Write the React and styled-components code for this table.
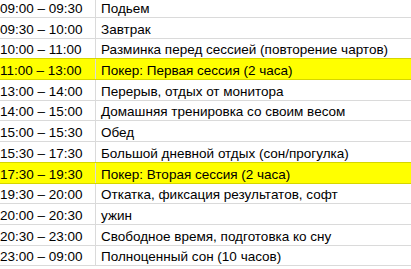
import React from "react";
import styled, { createGlobalStyle } from "styled-components";

const Global = createGlobalStyle`
  html, body { margin: 0; padding: 0; background: #fff; overflow: hidden; }
  body { font-family: "Liberation Sans", Arial, sans-serif; }
`;

const Sheet = styled.div`
  width: 411px;
  height: 269px;
  overflow: hidden;
`;

const Table = styled.div`
  margin-top: -2.7px;
  display: flex;
  flex-direction: column;
`;

const Row = styled.div`
  box-sizing: border-box;
  height: 20.7px;
  display: grid;
  grid-template-columns: 96px 1fr;
  border-bottom: 1px solid ${(p) => (p.$hl ? "#d6d600" : "#dadada")};
  background: ${(p) => (p.$hl ? "#ffff00" : "#ffffff")};
  box-shadow: ${(p) => (p.$hl ? "0 -1px 0 #d6d600" : "none")};
`;

const Cell = styled.div`
  box-sizing: border-box;
  display: flex;
  align-items: flex-end;
  padding: 0 0 1px ${(p) => p.$pad}px;
  font-size: 13.5px;
  line-height: 15px;
  color: #000;
  white-space: nowrap;
  overflow: visible;
  border-right: ${(p) => (p.$first ? "1px solid #dadada" : "none")};
`;

const rows = [
  ["09:00 – 09:30", "Подьем"],
  ["09:30 – 10:00", "Завтрак"],
  ["10:00 – 11:00", "Разминка перед сессией (повторение чартов)"],
  ["11:00 – 13:00", "Покер: Первая сессия (2 часа)", true],
  ["13:00 – 14:00", "Перерыв, отдых от монитора"],
  ["14:00 – 15:00", "Домашняя тренировка со своим весом"],
  ["15:00 – 15:30", "Обед"],
  ["15:30 – 17:30", "Большой дневной отдых (сон/прогулка)"],
  ["17:30 – 19:30", "Покер: Вторая сессия (2 часа)", true],
  ["19:30 – 20:00", "Откатка, фиксация результатов, софт"],
  ["20:00 – 20:30", "ужин"],
  ["20:30 – 23:00", "Свободное время, подготовка ко сну"],
  ["23:00 – 09:00", "Полноценный сон (10 часов)"],
];

export default function App() {
  return (
    <>
      <Global />
      <Sheet>
        <Table>
          {rows.map(([t, d, hl]) => (
            <Row key={t} $hl={hl}>
              <Cell $first $pad={0}>{t}</Cell>
              <Cell $pad={5}>{d}</Cell>
            </Row>
          ))}
        </Table>
      </Sheet>
    </>
  );
}
